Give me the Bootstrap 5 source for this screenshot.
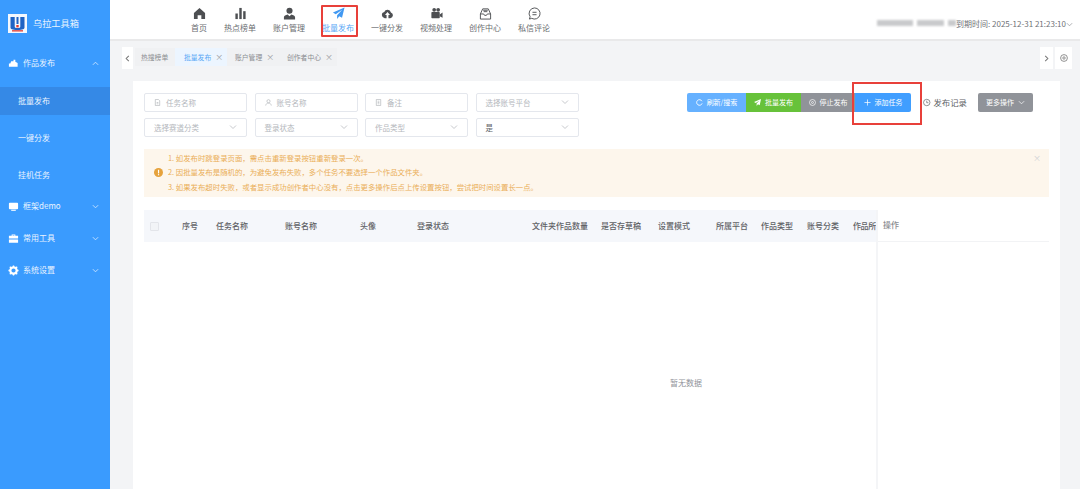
<!doctype html>
<html lang="zh">
<head>
<meta charset="utf-8">
<title>乌拉工具箱</title>
<link href="https://cdn.jsdelivr.net/npm/bootstrap@5.3.0/dist/css/bootstrap.min.css" rel="stylesheet">
<style>
html,body{height:100%;overflow:hidden}
body{font-family:"Noto Sans CJK SC","Liberation Sans",sans-serif;font-size:8px;color:#606266;background:#f3f4f6}
.shell{width:1080px;height:489px}
.side{width:110px;background:#3a9bfe;color:#fff;flex:none}
.brand{height:47px;padding-left:8px;gap:6px;font-size:9.2px;color:#e8f3ff}
.menu-row{height:32px;padding:0 11px 0 8px;font-size:8px;color:#eaf4ff}
.menu-row svg.ic{width:11px;height:11px;margin-right:4px;flex:none}
.menu-next{margin-top:-8px}
.caret{width:7px;height:7px;flex:none;margin-left:auto}
.sub-row{height:28px;margin-bottom:9px;padding-left:18px;font-size:8px;color:#eaf4ff}
.sub-first{margin-top:8px}
.sub-on{background:#3589e6}
.top{height:41px;background:#fff;border-bottom:2px solid #e9e9ea;flex:none}
.top-nav{padding-left:81px;gap:17px}
.nav-it{height:31px;margin-top:5px;color:#6b6e72;width:32px}
.nav-it svg{width:13px;height:13px;margin-top:2px;margin-bottom:2px;color:#4d4f52}
.nav-it.on{color:#5aa8f5}.nav-it.on svg{color:#4199f2}
.nav-short{width:16px}
.ring{position:absolute;border:2px solid #e8403a;pointer-events:none}
.ring-nav{left:321px;top:5px;width:37px;height:32px;border-radius:1px}
.ring-add{left:852px;top:82px;width:70px;height:43px}
.acct{position:absolute;right:7px;top:18px;font-size:8px;color:#6f7276;line-height:11px}
.acct svg{width:7px;height:7px;color:#8d8f93;vertical-align:-1px}
.mask{display:inline-block;height:6px;background:#c9cacc;filter:blur(1.2px);margin-right:4px;vertical-align:1px}
.tabs{height:40px;padding:6px 8px 0 12px;flex:none}
.tab-arrow{width:11px;height:22px;background:#fff;color:#777}
.tab-strip{margin-left:2px;height:18px;margin-top:1px;background:#f0f1f3;color:#8b8d91;font-size:6.8px;white-space:nowrap}
.tab-it{height:18px;gap:4px;padding-left:6px}
.tab-it.on{background:#ecf5ff;color:#5aa8f5;padding-left:9px}
.tab-x{font-size:8px;color:#9b9da1;line-height:1}
.tab-w1{width:40px}.tab-w2{width:52px}.tab-w3{width:53px;padding-left:8px}.tab-w4{width:57px;padding-left:7px}
.tab-end{width:13px;height:22px;background:#fff;color:#777}
.tab-gear{width:17px;margin-left:2px}
.panel{margin:0 20px 0 23px;background:#fff;flex:1;min-height:0;padding:12px 11px 0 11px;position:relative}
.filters{width:435px;row-gap:6.5px;column-gap:7.5px;flex-wrap:wrap;flex:none}
.fld{width:103px;height:18.5px;border:1px solid #e4e7ed;border-radius:2px;color:#b4b7bc;padding:0 9px;font-size:7.5px;background:#fff}
.fld svg{width:7px;height:7px;margin-right:5px;color:#b4b7bc}
.fld.val{color:#606266}
.fld .caret{color:#b8babf;width:8px;height:8px;margin-right:0}
.acts{margin-left:auto;margin-right:16px;height:19px}
.bt{height:19px;border:0;color:#fff;font-size:7px;padding:0;gap:4px;border-radius:0}
.bt svg{width:7px;height:7px}
.bt-a{width:59px;background:#66b1ff;border-radius:2px 0 0 2px}
.bt-b{width:55px;background:#67c23a}
.bt-c{width:54px;background:#909399}
.bt-d{width:56px;background:#409eff;border-radius:0 2px 2px 0}
.rec{margin-left:12px;width:44px;font-size:8.4px;gap:3px;color:#606266}
.rec svg{width:9px;height:9px}
.bt-e{width:55px;margin-left:11px;background:#909399;border-radius:2px}
.tip{height:48px;margin-top:12px;background:#fdf6ec;color:#eaae58;font-size:7.4px;position:relative;padding-left:24px}
.tip p{margin:0;line-height:14.5px}
.tip-ic{position:absolute;left:10px;top:19px;width:9px;height:9px}
.tip-x{position:absolute;right:8px;top:3px;color:#cfd1d4;font-size:8px;line-height:12px}
.grid{margin-top:13px;flex:1;min-height:0;position:relative}
.grid-main{width:732px;flex:none}
.tb{table-layout:fixed;width:732px;border-collapse:collapse;margin:0}
.tb th{height:32px;padding:0;background:#f5f7fb;color:#5f6165;font-size:8px;font-weight:500;white-space:nowrap;border:0}
.tb th:last-child{letter-spacing:-.4px}
.chk{display:inline-block;width:9px;height:9px;border:1px solid #e3e5ea;border-radius:1px;background:#f2f4f7;margin-left:6px;vertical-align:middle}
.empty{position:absolute;left:526px;top:167px;color:#909399;font-size:8px}
.grid-fix{flex:1;border-left:2px solid #f4f5f7}
.fix-head{height:32px;padding-left:5px;color:#8a8c90;font-size:8px;border-bottom:1px solid #f2f3f5;font-weight:500}
</style>
</head>
<body>
<div class="shell d-flex position-relative">
  <aside class="side d-flex flex-column">
    <div class="brand d-flex align-items-center">
      <svg width="19" height="19" viewBox="0 0 19 19"><rect width="19" height="19" fill="#f4f8fe"/><path d="M2.500 3h4.200v9.500c0 1 .8 1.500 2.800 1.500s2.800-.5 2.800-1.500V3h4.200v10.500c0 1.500-1.500 2.500-7 2.500s-7-1-7-2.500z" fill="#1f63c4"/><path d="M8.500 3h2v7h-2z" fill="#1f63c4"/><rect x="8.300" y="11" width="2.400" height="2.400" fill="#e23a2e"/><rect x="4" y="16.200" width="11" height="1.300" fill="#e23a2e"/></svg>
      <span>乌拉工具箱</span>
    </div>
    <div class="menu-row d-flex align-items-center"><svg class="ic" viewBox="0 0 12 12" fill="#fff"><path d="M1 6h1.500l1-2.500h2.500V2h2v2l2.500 1.500V9.500H1z"/></svg>作品发布<svg class="caret" viewBox="0 0 8 8" fill="none" stroke="#cfe6ff"><path d="M1 5.500 4 2.500l3 3"/></svg></div>
    <div class="sub-row sub-first sub-on d-flex align-items-center">批量发布</div>
    <div class="sub-row d-flex align-items-center">一键分发</div>
    <div class="sub-row d-flex align-items-center">挂机任务</div>
    <div class="menu-row menu-next d-flex align-items-center"><svg class="ic" viewBox="0 0 12 12" fill="#fff"><rect x="1" y="2" width="10" height="7" rx="1"/><rect x="3.500" y="9.500" width="5" height="1.200"/></svg>框架demo<svg class="caret" viewBox="0 0 8 8" fill="none" stroke="#cfe6ff"><path d="M1 2.500 4 5.500l3-3"/></svg></div>
    <div class="menu-row d-flex align-items-center"><svg class="ic" viewBox="0 0 12 12" fill="#fff"><path d="M4 3V1.500h4V3h3v3H1V3zM5 3h2V2.500H5zM1 7h10v3.500H1z"/></svg>常用工具<svg class="caret" viewBox="0 0 8 8" fill="none" stroke="#cfe6ff"><path d="M1 2.500 4 5.500l3-3"/></svg></div>
    <div class="menu-row d-flex align-items-center"><svg class="ic" viewBox="0 0 12 12"><circle cx="6" cy="6" r="3.500" fill="none" stroke="#fff" stroke-width="2.400"/><path d="M6 .5v2M6 9.500v2M.5 6h2M9.500 6h2M2 2l1.500 1.500M8.500 8.500 10 10M10 2 8.500 3.500M3.500 8.500 2 10" stroke="#fff" stroke-width="1.500"/></svg>系统设置<svg class="caret" viewBox="0 0 8 8" fill="none" stroke="#cfe6ff"><path d="M1 2.500 4 5.500l3-3"/></svg></div>
  </aside>
  <main class="flex-grow-1 d-flex flex-column" style="min-width:0">
    <header class="top d-flex top-nav">
      <div class="nav-it nav-short d-flex flex-column align-items-center"><svg viewBox="0 0 14 14" fill="currentColor"><path d="M7 1 1 6.500V13h4V9h4v4h4V6.500z"/></svg><span>首页</span></div>
      <div class="nav-it d-flex flex-column align-items-center"><svg viewBox="0 0 14 14" fill="currentColor"><rect x="1.500" y="7" width="2.600" height="6"/><rect x="5.700" y="1" width="2.600" height="12"/><rect x="9.900" y="4.500" width="2.600" height="8.500"/></svg><span>热点榜单</span></div>
      <div class="nav-it d-flex flex-column align-items-center"><svg viewBox="0 0 14 14" fill="currentColor"><circle cx="7" cy="4" r="3.300"/><path d="M1 13.500V11c0-1.500 2-2.500 4-3l2 2 2-2c2 .5 4 1.500 4 3v2.500z"/></svg><span>账户管理</span></div>
      <div class="nav-it on d-flex flex-column align-items-center"><svg viewBox="0 0 14 14" fill="currentColor"><path d="M13.500.5 1 6l3 1.800L11 3 5.500 8.800v4l2.300-2.800 3 1.500z"/></svg><span>批量发布</span></div>
      <div class="nav-it d-flex flex-column align-items-center"><svg viewBox="0 0 14 14" fill="currentColor"><path d="M4 12a3.300 3.300 0 0 1-.5-6.500 3.800 3.800 0 0 1 7.200.3A3.200 3.200 0 0 1 10 12H8V8.500h1.700L7 5.500l-2.700 3H6V12z"/></svg><span>一键分发</span></div>
      <div class="nav-it d-flex flex-column align-items-center"><svg viewBox="0 0 14 14" fill="currentColor"><circle cx="4.500" cy="3" r="2"/><circle cx="8.800" cy="3" r="2"/><rect x="1.500" y="5.500" width="9" height="6.500" rx=".7"/><path d="M10.500 8 13.500 6v5.500L10.500 10z"/></svg><span>视频处理</span></div>
      <div class="nav-it d-flex flex-column align-items-center"><svg viewBox="0 0 14 14" fill="none" stroke="currentColor"><path d="M1.500 7.500 4 2h6l2.500 5.500V13h-11zM1.500 7.500H5l1 1.500h2l1-1.500h3.500"/><path d="M5 5h4M4.500 3.500h5"/></svg><span>创作中心</span></div>
      <div class="nav-it d-flex flex-column align-items-center"><svg viewBox="0 0 14 14" fill="none" stroke="currentColor"><path d="M7 1a6 6 0 1 1-3 11.200L1.500 13l.8-2.500A6 6 0 0 1 7 1zM4.800 5.700h4.400M4.800 8.300h4.400"/></svg><span>私信评论</span></div>
    </header>
    <div class="tabs d-flex">
      <div class="tab-arrow d-flex align-items-center justify-content-center"><svg width="7" height="7" viewBox="0 0 8 8" fill="none" stroke="currentColor" stroke-width="1.200"><path d="M5.500 1 2.500 4l3 3"/></svg></div>
      <div class="tab-strip d-flex">
        <div class="tab-it tab-w1 d-flex align-items-center">热搜榜单</div>
        <div class="tab-it tab-w2 on d-flex align-items-center"><span>批量发布</span><span class="tab-x">×</span></div>
        <div class="tab-it tab-w3 d-flex align-items-center"><span>账户管理</span><span class="tab-x">×</span></div>
        <div class="tab-it tab-w4 d-flex align-items-center"><span>创作者中心</span><span class="tab-x">×</span></div>
      </div>
      <div class="tab-end ms-auto d-flex align-items-center justify-content-center"><svg width="7" height="7" viewBox="0 0 8 8" fill="none" stroke="currentColor" stroke-width="1.200"><path d="M2.500 1l3 3-3 3"/></svg></div>
      <div class="tab-end tab-gear d-flex align-items-center justify-content-center"><svg width="8" height="8" viewBox="0 0 8 8" fill="none" stroke="currentColor" stroke-width=".8"><circle cx="4" cy="4" r="3.400"/><circle cx="4" cy="4" r="1.200"/></svg></div>
    </div>
    <section class="panel d-flex flex-column">
      <div class="d-flex">
        <div class="filters d-flex">
          <div class="fld d-flex align-items-center"><svg viewBox="0 0 8 8" fill="none" stroke="currentColor" stroke-width=".8"><path d="M1.500.5h3.500l1.500 1.500v5.500h-5zM3 4h2M3 5.500h2"/></svg>任务名称</div>
          <div class="fld d-flex align-items-center"><svg viewBox="0 0 8 8" fill="none" stroke="currentColor" stroke-width=".8"><circle cx="4" cy="2.500" r="1.800"/><path d="M.8 7.500c.3-2 1.500-2.800 3.200-2.800s2.900.8 3.200 2.800"/></svg>账号名称</div>
          <div class="fld d-flex align-items-center"><svg viewBox="0 0 8 8" fill="none" stroke="currentColor" stroke-width=".8"><path d="M1.500.5h5v7h-5zM3 2.500h2M3 4h2M3 5.500h2"/></svg>备注</div>
          <div class="fld d-flex align-items-center">选择账号平台<svg class="caret" viewBox="0 0 8 8" fill="none" stroke="currentColor" stroke-width=".8"><path d="M1 2.500 4 5.500l3-3"/></svg></div>
          <div class="fld d-flex align-items-center">选择赛道分类<svg class="caret" viewBox="0 0 8 8" fill="none" stroke="currentColor" stroke-width=".8"><path d="M1 2.500 4 5.500l3-3"/></svg></div>
          <div class="fld d-flex align-items-center">登录状态<svg class="caret" viewBox="0 0 8 8" fill="none" stroke="currentColor" stroke-width=".8"><path d="M1 2.500 4 5.500l3-3"/></svg></div>
          <div class="fld d-flex align-items-center">作品类型<svg class="caret" viewBox="0 0 8 8" fill="none" stroke="currentColor" stroke-width=".8"><path d="M1 2.500 4 5.500l3-3"/></svg></div>
          <div class="fld val d-flex align-items-center">是<svg class="caret" viewBox="0 0 8 8" fill="none" stroke="currentColor" stroke-width=".8"><path d="M1 2.500 4 5.500l3-3"/></svg></div>
        </div>
        <div class="acts d-flex align-items-center">
          <button class="btn bt bt-a d-flex align-items-center justify-content-center"><svg viewBox="0 0 8 8" fill="none" stroke="currentColor"><path d="M6.800 2.500A3.200 3.200 0 1 0 7 5"/></svg>刷新/搜索</button>
          <button class="btn bt bt-b d-flex align-items-center justify-content-center"><svg viewBox="0 0 8 8" fill="currentColor"><path d="M8 0 0 3.500l2 1L6 2 3 5v3l1.500-2 2 1z"/></svg>批量发布</button>
          <button class="btn bt bt-c d-flex align-items-center justify-content-center"><svg viewBox="0 0 8 8" fill="none" stroke="currentColor" stroke-width=".8"><circle cx="4" cy="4" r="3.400"/><circle cx="4" cy="4" r="1.100"/></svg>停止发布</button>
          <button class="btn bt bt-d d-flex align-items-center justify-content-center"><svg viewBox="0 0 8 8" fill="none" stroke="currentColor" stroke-width=".8"><path d="M4 .5v7M.5 4h7"/></svg>添加任务</button>
          <div class="rec d-flex align-items-center"><svg viewBox="0 0 10 10" fill="none" stroke="#606266" stroke-width=".9"><circle cx="5" cy="5" r="4.300"/><path d="M5 2.500V5.300h2.200"/></svg><span class="text-nowrap">发布记录</span></div>
          <button class="btn bt bt-e d-flex align-items-center justify-content-center">更多操作<svg viewBox="0 0 8 8" fill="none" stroke="currentColor" stroke-width=".8"><path d="M1 2.500 4 5.500l3-3"/></svg></button>
        </div>
      </div>
      <div class="tip d-flex flex-column justify-content-center">
        <svg class="tip-ic" viewBox="0 0 10 10"><circle cx="5" cy="5" r="5" fill="#e6a23c"/><rect x="4.400" y="2" width="1.300" height="4" fill="#fff"/><rect x="4.400" y="6.800" width="1.300" height="1.300" fill="#fff"/></svg>
        <p>1. 如发布时跳登录页面，需点击重新登录按钮重新登录一次。</p>
        <p>2. 因批量发布是随机的，为避免发布失败，多个任务不要选择一个作品文件夹。</p>
        <p>3. 如果发布超时失败，或者显示成功创作者中心没有，点击更多操作后点上传设置按钮，尝试把时间设置长一点。</p>
        <span class="tip-x">×</span>
      </div>
      <div class="grid d-flex">
        <div class="grid-main">
          <table class="tb">
            <colgroup><col style="width:38px"><col style="width:34px"><col style="width:69px"><col style="width:75px"><col style="width:57px"><col style="width:115px"><col style="width:69px"><col style="width:57px"><col style="width:58px"><col style="width:45px"><col style="width:46px"><col style="width:46px"><col style="width:23px"></colgroup>
            <thead><tr><th><span class="chk"></span></th><th>序号</th><th>任务名称</th><th>账号名称</th><th>头像</th><th>登录状态</th><th>文件夹作品数量</th><th>是否存草稿</th><th>设置模式</th><th>所属平台</th><th>作品类型</th><th>账号分类</th><th>作品所</th></tr></thead>
          </table>
          <div class="empty">暂无数据</div>
        </div>
        <div class="grid-fix">
          <div class="fix-head d-flex align-items-center">操作</div>
        </div>
      </div>
    </section>
  </main>
  <div class="acct text-nowrap"><span class="mask" style="width:36px"></span><span class="mask" style="width:27px"></span><span class="mask" style="width:8px;margin-right:0"></span>到期时间: 2025-12-31 21:23:10<svg viewBox="0 0 8 8" fill="none" stroke="currentColor" stroke-width=".8"><path d="M1 2.500 4 5.500l3-3"/></svg></div>
  <div class="ring ring-nav"></div>
  <div class="ring ring-add"></div>
</div>
<script src="https://cdn.jsdelivr.net/npm/bootstrap@5.3.0/dist/js/bootstrap.bundle.min.js"></script>
</body>
</html>
